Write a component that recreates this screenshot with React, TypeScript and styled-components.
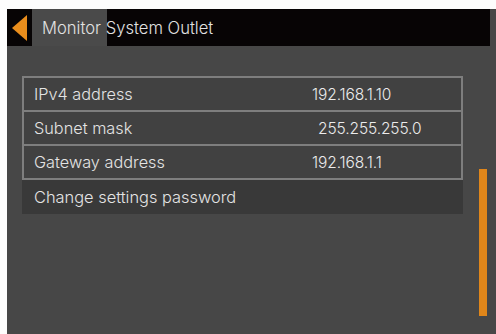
import React from "react";
import styled, { createGlobalStyle } from "styled-components";

const Global = createGlobalStyle`
  html, body { margin: 0; padding: 0; background: #fdfdfd; }
  body { font-family: Inter, "Noto Sans", sans-serif; }
`;

const Screen = styled.div`
  margin: 9px 0 0 7px;
  width: 489px;
  height: 325px;
  background: #474747;
  display: flex;
  flex-direction: column;
`;

const Header = styled.div`
  position: relative;
  height: 37px;
  width: 483px;
  background: #070405;
  display: flex;
  align-items: center;
`;

const BackButton = styled.div`
  width: 25px;
  height: 37px;
  display: flex;
  align-items: center;
  justify-content: center;
  flex: none;
`;

const TitleTab = styled.div`
  width: 75px;
  height: 37px;
  background: #4a4a4a;
  flex: none;
`;

const Title = styled.div`
  position: absolute;
  left: 35px;
  top: 0;
  height: 37px;
  display: flex;
  align-items: center;
  color: #e2e2e2;
  font-size: 16.6px;
  font-weight: 300;
`;

const Body = styled.div`
  flex: 1;
  display: flex;
  padding: 30px 0 0 15px;
  gap: 16px;
`;

const ListColumn = styled.div`
  width: 441px;
  display: flex;
  flex-direction: column;
`;

const Table = styled.div`
  border: 2px solid #7e7e7e;
`;

const Row = styled.div`
  height: 32px;
  display: grid;
  grid-template-columns: 288px 1fr;
  align-items: center;
  background: #414141;
  & + & { border-top: 2px solid #7e7e7e; }
`;

const Label = styled.span`
  padding-left: 10px;
  color: #e4e4e4;
  font-size: 16.3px;
  font-weight: 300;
`;

const Value = styled.span<{ $indent?: number }>`
  padding-left: ${(p) => p.$indent ?? 0}px;
  color: #ececec;
  font-size: 15.5px;
  font-weight: 300;
  letter-spacing: -0.1px;
`;

const ActionRow = styled.div`
  height: 34px;
  background: #393939;
  display: flex;
  align-items: center;
  padding-left: 12px;
  color: #e4e4e4;
  font-size: 16.4px;
  font-weight: 300;
`;

const ScrollTrack = styled.div`
  width: 8px;
  height: 240px;
  display: flex;
  flex-direction: column;
  justify-content: flex-end;
`;

const ScrollThumb = styled.div`
  width: 8px;
  background: #e0861a;
`;

const rows = [
  { label: "IPv4 address", value: "192.168.1.10", indent: 0 },
  { label: "Subnet mask", value: "255.255.255.0", indent: 6 },
  { label: "Gateway address", value: "192.168.1.1", indent: 0 },
];

export default function App() {
  return (
    <>
      <Global />
      <Screen>
        <Header>
          <BackButton>
            <svg width="16" height="26" viewBox="0 0 16 26">
              <polygon points="15,0 15,26 0,13" fill="#e98d1c" />
            </svg>
          </BackButton>
          <TitleTab />
          <Title>Monitor System Outlet</Title>
        </Header>
        <Body>
          <ListColumn>
            <Table>
              {rows.map((r) => (
                <Row key={r.label}>
                  <Label>{r.label}</Label>
                  <Value $indent={r.indent}>{r.value}</Value>
                </Row>
              ))}
            </Table>
            <ActionRow>Change settings password</ActionRow>
          </ListColumn>
          <ScrollTrack>
            <ScrollThumb style={{ height: 147 }} />
          </ScrollTrack>
        </Body>
      </Screen>
    </>
  );
}
